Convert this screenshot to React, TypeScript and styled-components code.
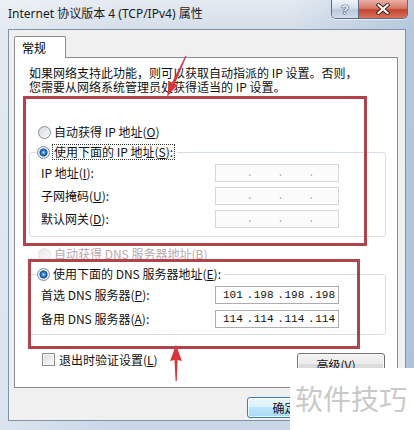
import React from "react";
import styled, { createGlobalStyle } from "styled-components";

const UI_FONT = `"Noto Sans CJK SC", "Noto Sans", sans-serif`;
const MONO_FONT = `"Liberation Mono", "DejaVu Sans Mono", monospace`;

const GlobalStyle = createGlobalStyle`
  *, *::before, *::after { box-sizing: border-box; }
  html, body { margin: 0; padding: 0; background: #ffffff; }
  body { font-family: ${UI_FONT}; font-size: 12px; color: #000; }
`;

const Window = styled.div`
  position: relative;
  width: 414px;
  height: 430px;
  overflow: hidden;
  display: flex;
  flex-direction: column;
  background:
    linear-gradient(90deg, rgba(255,255,255,0.35), rgba(255,255,255,0) 30%, rgba(255,255,255,0) 70%, rgba(120,155,200,0.35)),
    linear-gradient(180deg, #e4eaf1 0%, #d4dee9 7%, #c8d6e6 100%);
`;

const TitleBar = styled.div`
  height: 29px;
  flex-shrink: 0;
  display: flex;
  align-items: flex-start;
  padding: 0 6px 0 8px;
`;

const Title = styled.span`
  margin-top: 6px;
  font: 12px/16px "Noto Sans", "Noto Sans CJK SC", sans-serif;
  color: #1b1b1b;
  white-space: nowrap;
`;

const CaptionGroup = styled.div`
  margin-left: auto;
  display: flex;
  height: 19px;
  border: 1px solid #5d6c80;
  border-top: none;
  border-radius: 0 0 5px 5px;
  overflow: hidden;
  box-shadow: 0 1px 0 rgba(255, 255, 255, 0.6);
`;

const CaptionButton = styled.div<{ $variant: "help" | "close" }>`
  width: ${(p) => (p.$variant === "close" ? 49 : 26)}px;
  display: flex;
  align-items: center;
  justify-content: center;
  background: ${(p) =>
    p.$variant === "close"
      ? "linear-gradient(180deg, #eab0a4 0%, #d77a68 45%, #c4442f 55%, #d9745c 100%)"
      : "linear-gradient(180deg, #eef3f8 0%, #d5dfea 45%, #bac9db 55%, #d0dcea 100%)"};
  & + & {
    border-left: 1px solid #5d6c80;
  }
`;

const HelpGlyph = styled.span`
  font: bold 13px/1 "Liberation Sans", sans-serif;
  color: #f4f6f9;
  text-shadow: 0 0 1px #2c3a4c, 0 0 1px #2c3a4c, 0 0 1px #2c3a4c;
`;

const Client = styled.div`
  flex: 1;
  margin: 0 8px 9px;
  background: #f0f0f0;
  border: 1px solid #7f92a8;
  display: flex;
  flex-direction: column;
  padding: 6px 7px 0 5px;
`;

const TabStrip = styled.div`
  display: flex;
  height: 22px;
  position: relative;
  z-index: 1;
  margin-bottom: -1px;
`;

const Tab = styled.div`
  width: 52px;
  height: 22px;
  border: 1px solid #898c95;
  border-bottom: none;
  border-radius: 2px 2px 0 0;
  background: #fff;
  padding: 3px 0 0 7px;
  font: 12px/15px ${UI_FONT};
`;

const Panel = styled.div`
  height: 331px;
  background: #fff;
  border: 1px solid #898c95;
  padding: 8px 11px 0 14px;
  display: flex;
  flex-direction: column;
`;

const Description = styled.p`
  margin: 0;
  font: 12px/14px ${UI_FONT};
  color: #111;
  white-space: nowrap;
`;

const RadioRow = styled.div<{ $indent?: number; $top?: number; $disabled?: boolean }>`
  display: flex;
  align-items: center;
  gap: 3px;
  height: 20px;
  padding-left: ${(p) => p.$indent ?? 0}px;
  margin-top: ${(p) => p.$top ?? 0}px;
  font: 12px/14px ${UI_FONT};
  color: ${(p) => (p.$disabled ? "#b9a9ac" : "#111")};
  white-space: nowrap;
`;

const RadioDot = styled.span<{ $checked?: boolean; $disabled?: boolean }>`
  width: 13px;
  height: 13px;
  flex-shrink: 0;
  border-radius: 50%;
  border: 1px solid ${(p) => (p.$disabled ? "#cfd2d6" : "#858f9b")};
  background: ${(p) =>
    p.$checked
      ? "radial-gradient(circle at 50% 50%, #bfe6ff 0, #4a97dc 1.5px, #0d4c98 3.5px, #eef1f4 4.5px, #dcdfe3 100%)"
      : "linear-gradient(135deg, #d6d8db, #fbfbfb)"};
  opacity: ${(p) => (p.$disabled ? 0.6 : 1)};
`;

const FocusText = styled.span`
  outline: 1px dotted #333;
  outline-offset: 0;
  padding: 0 1px;
`;

const Group = styled.fieldset<{ $padBottom: number }>`
  margin: 0;
  min-width: 0;
  border: 1px solid #d5dfe5;
  border-radius: 3px;
  padding: 2px 0 ${(p) => p.$padBottom}px 11px;
`;

const Legend = styled.legend`
  margin-left: -4px;
  padding: 0 3px 0 0;
`;

const FieldGrid = styled.div<{ $gap: number }>`
  display: grid;
  grid-template-columns: 174px 124px;
  row-gap: ${(p) => p.$gap}px;
  align-items: center;
`;

const FieldLabel = styled.span`
  font: 12px/14px ${UI_FONT};
  color: #111;
  white-space: nowrap;
`;

const IpBox = styled.div<{ $disabled?: boolean }>`
  width: 124px;
  height: 18px;
  border: 1px solid ${(p) => (p.$disabled ? "#d3d6da" : "#abadb3")};
  background: ${(p) => (p.$disabled ? "#fbfbfb" : "#fff")};
  display: flex;
  align-items: center;
  padding-left: 7px;
  font: 11px/14px ${MONO_FONT};
  color: ${(p) => (p.$disabled ? "#a8a8a8" : "#111")};
`;

const Octet = styled.span`
  width: 23px;
  white-space: nowrap;
`;

const Dot = styled.span`
  width: 8px;
  text-align: center;
`;

const BottomRow = styled.div`
  display: flex;
  align-items: flex-start;
  margin-top: 18px;
`;

const CheckRow = styled.label`
  display: flex;
  align-items: center;
  gap: 4px;
  padding-left: 13px;
  height: 13px;
  font: 12px/14px ${UI_FONT};
  color: #111;
`;

const CheckBox = styled.span`
  width: 13px;
  height: 13px;
  border: 1px solid #8e8f8f;
  background: linear-gradient(135deg, #dadbdc, #fbfbfb);
  box-shadow: inset 0 0 0 1px #f4f4f4;
`;

const PushButton = styled.div<{ $width: number; $height: number; $default?: boolean }>`
  width: ${(p) => p.$width}px;
  height: ${(p) => p.$height}px;
  display: flex;
  align-items: center;
  justify-content: center;
  font: 12px/14px ${UI_FONT};
  color: #111;
  border: 1px solid ${(p) => (p.$default ? "#3c7fb1" : "#707070")};
  border-radius: 3px;
  background: ${(p) =>
    p.$default
      ? "linear-gradient(180deg, #eaf6fd 0%, #d9f0fc 49%, #bee6fd 50%, #a7d9f5 100%)"
      : "linear-gradient(180deg, #f2f2f2 0%, #ebebeb 49%, #dddddd 50%, #cfcfcf 100%)"};
  box-shadow: inset 0 0 0 1px rgba(255, 255, 255, 0.75);
`;

const Footer = styled.div`
  display: flex;
  justify-content: flex-end;
  gap: 6px;
  padding-top: 9px;
`;

const RedBox = styled.div<{ $x: number; $y: number; $w: number; $h: number }>`
  position: absolute;
  left: ${(p) => p.$x}px;
  top: ${(p) => p.$y}px;
  width: ${(p) => p.$w}px;
  height: ${(p) => p.$h}px;
  border: 3px solid #b3424c;
  pointer-events: none;
`;

const Annotations = styled.svg`
  position: absolute;
  left: 0;
  top: 0;
  pointer-events: none;
`;

const Watermark = styled.div`
  position: absolute;
  left: 290px;
  top: 368px;
  width: 124px;
  height: 62px;
  background: #fff;
  padding: 16px 0 0 5px;
  font: 28px/28px ${UI_FONT};
  color: #c9c9c9;
  white-space: nowrap;
`;

type IpProps = { value?: string[]; disabled?: boolean };

function IpField({ value, disabled }: IpProps) {
  const parts = value ?? ["", "", "", ""];
  return (
    <IpBox $disabled={disabled}>
      {parts.map((part, i) => (
        <React.Fragment key={i}>
          {i > 0 && <Dot>.</Dot>}
          <Octet>{part}</Octet>
        </React.Fragment>
      ))}
    </IpBox>
  );
}

export default function App() {
  return (
    <>
      <GlobalStyle />
      <Window>
        <TitleBar>
          <Title>Internet 协议版本 4 (TCP/IPv4) 属性</Title>
          <CaptionGroup>
            <CaptionButton $variant="help">
              <HelpGlyph>?</HelpGlyph>
            </CaptionButton>
            <CaptionButton $variant="close">
              <svg width="14" height="12" viewBox="0 0 14 12">
                <path d="M2.5 2 L11.5 10 M11.5 2 L2.5 10" stroke="#4a1c16" strokeWidth="4" strokeLinecap="square" />
                <path d="M2.5 2 L11.5 10 M11.5 2 L2.5 10" stroke="#ffffff" strokeWidth="2.2" strokeLinecap="square" />
              </svg>
            </CaptionButton>
          </CaptionGroup>
        </TitleBar>

        <Client>
          <TabStrip>
            <Tab>常规</Tab>
          </TabStrip>
          <Panel>
            <Description>
              如果网络支持此功能，则可以获取自动指派的 IP 设置。否则，
              <br />
              您需要从网络系统管理员处获得适当的 IP 设置。
            </Description>

            <RadioRow $indent={9} $top={28}>
              <RadioDot />
              <span>
                自动获得 IP 地址(<u>O</u>)
              </span>
            </RadioRow>

            <Group $padBottom={8}>
              <Legend>
                <RadioRow>
                  <RadioDot $checked />
                  <FocusText>
                    使用下面的 IP 地址(<u>S</u>):
                  </FocusText>
                </RadioRow>
              </Legend>
              <FieldGrid $gap={5}>
                <FieldLabel>
                  IP 地址(<u>I</u>):
                </FieldLabel>
                <IpField disabled />
                <FieldLabel>
                  子网掩码(<u>U</u>):
                </FieldLabel>
                <IpField disabled />
                <FieldLabel>
                  默认网关(<u>D</u>):
                </FieldLabel>
                <IpField disabled />
              </FieldGrid>
            </Group>

            <RadioRow $indent={9} $top={7} $disabled>
              <RadioDot $disabled />
              <span>
                自动获得 DNS 服务器地址(<u>B</u>)
              </span>
            </RadioRow>

            <Group $padBottom={6}>
              <Legend>
                <RadioRow>
                  <RadioDot $checked />
                  <span>
                    使用下面的 DNS 服务器地址(<u>E</u>):
                  </span>
                </RadioRow>
              </Legend>
              <FieldGrid $gap={6}>
                <FieldLabel>
                  首选 DNS 服务器(<u>P</u>):
                </FieldLabel>
                <IpField value={["101", "198", "198", "198"]} />
                <FieldLabel>
                  备用 DNS 服务器(<u>A</u>):
                </FieldLabel>
                <IpField value={["114", "114", "114", "114"]} />
              </FieldGrid>
            </Group>

            <BottomRow>
              <CheckRow>
                <CheckBox />
                <span>
                  退出时验证设置(<u>L</u>)
                </span>
              </CheckRow>
              <PushButton $width={88} $height={23} style={{ marginLeft: "auto", marginRight: 1 }}>
                高级(<u>V</u>)...
              </PushButton>
            </BottomRow>
          </Panel>

          <Footer>
            <PushButton $width={75} $height={21} $default>
              确定
            </PushButton>
            <PushButton $width={70} $height={21}>
              取消
            </PushButton>
          </Footer>
        </Client>

        <RedBox $x={23} $y={96} $w={344} $h={150} />
        <RedBox $x={28} $y={259} $w={332} $h={90} />

        <Annotations width="414" height="430" viewBox="0 0 414 430">
          <polygon
            points="186.5,56.3 174.8,83.8 177.5,85.1 167.1,96.8 169.3,81.3 172.0,82.6 185.5,55.7"
            fill="#d8363d"
          />
          <polygon
            points="176,345 182,361 177.6,360 176.8,381 175.6,381 174.5,360 170,361"
            fill="#d8363d"
          />
        </Annotations>

        <Watermark>软件技巧</Watermark>
      </Window>
    </>
  );
}
